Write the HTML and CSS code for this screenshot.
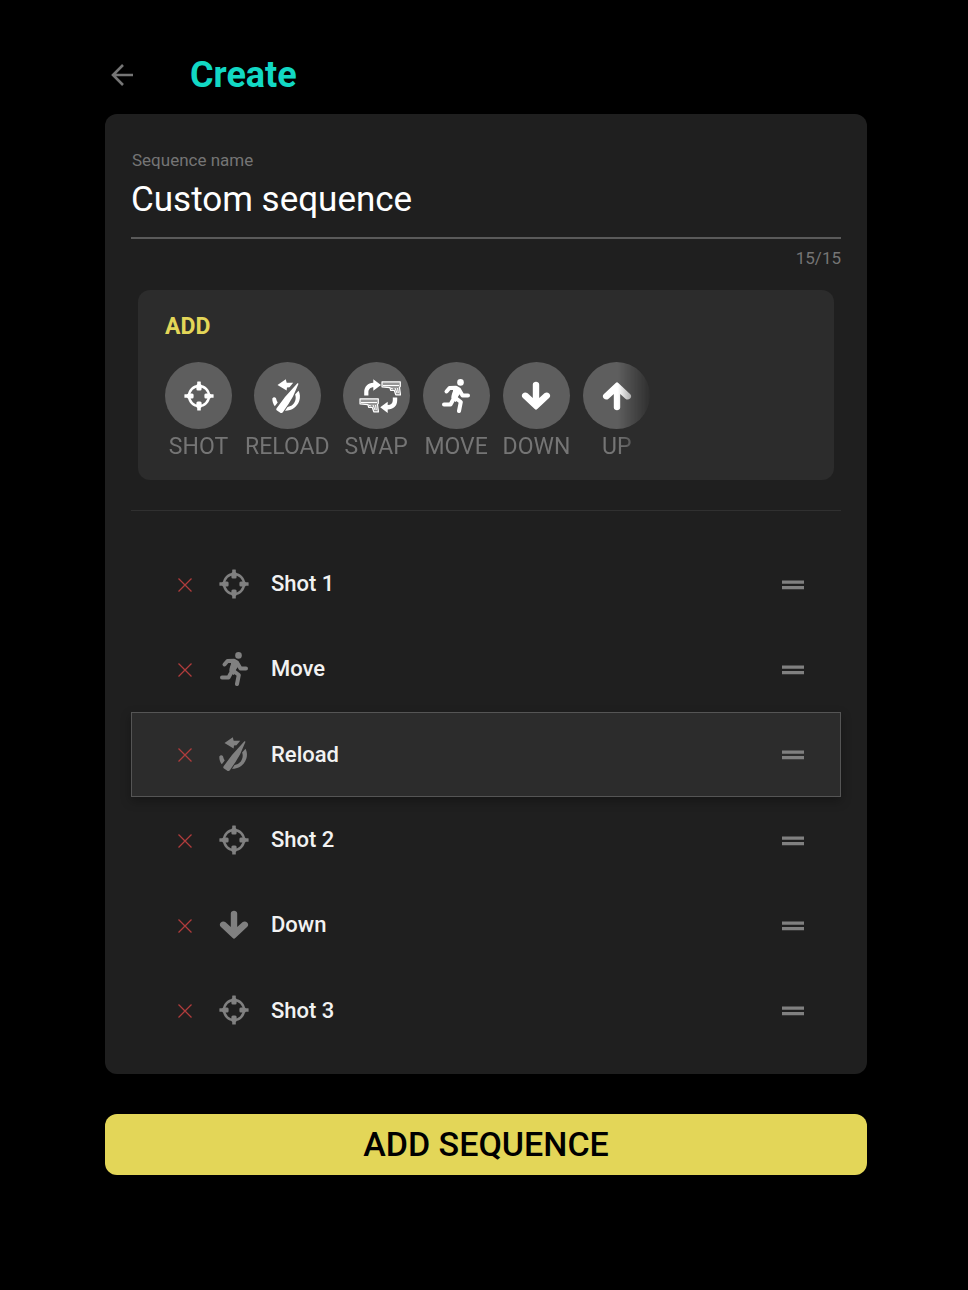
FILE: index.html
```html
<!DOCTYPE html>
<html lang="en">
<head>
  <meta charset="UTF-8" />
  <meta name="viewport" content="width=device-width, initial-scale=1.0"/>
  <title>Create sequence</title>
  <link rel="stylesheet" href="styles.css">
</head>
<body>
  <!-- Shared icons -->
  <svg class="sprite" aria-hidden="true">
    <symbol id="icon-shot" viewBox="0 0 30 34">
      <circle cx="15" cy="17" r="10" fill="none" stroke="currentColor" stroke-width="2.5"/>
      <g fill="currentColor">
        <rect x="13.2" y="2.400" width="3.600" height="6" rx=".5"/>
        <rect x="12.4" y="5" width="5.200" height="6.600" rx="1.500"/>
        <rect x="13.200" y="25.600" width="3.600" height="6" rx=".5"/>
        <rect x="12.400" y="22.400" width="5.200" height="6.600" rx="1.500"/>
        <rect x=".4" y="15.200" width="6" height="3.600" rx=".5"/>
        <rect x="3" y="14.400" width="6.600" height="5.200" rx="1.500"/>
        <rect x="23.600" y="15.200" width="6" height="3.600" rx=".5"/>
        <rect x="20.400" y="14.400" width="6.600" height="5.200" rx="1.500"/>
      </g>
    </symbol>
    <symbol id="icon-move" viewBox="0 0 30 34">
      <circle cx="19.5" cy="3.400" r="3.300" fill="currentColor"/>
      <g fill="none" stroke="currentColor" stroke-width="4" stroke-linecap="round" stroke-linejoin="round">
        <path d="M5.500 12.500L8.500 9l6.500-.2 3 1.700 3.500 6H27"/>
        <path d="M3 25.500h6.500l2.200-4"/>
        <path d="M14 18.500l5.800 4.500-1.800 9"/>
      </g>
      <path d="M12 8l6 1.500 1.800 4-3.300 5 1 2-3 2.500-4-3c-.6-2 .3-5 1.500-8z" fill="currentColor"/>
    </symbol>
    <symbol id="icon-reload" viewBox="0 0 30 34">
      <path d="M5.500 6L13.800.3l.9 3.500h6.500l-3.700 4.500-2.500.2-.4 3z" fill="currentColor"/>
      <path d="M25.400 4.300c.8-.4 1.200.2.900 1L21 17.500l-4.500 7.500-5.500 8c-.8 1.100-1.700 1.300-2.700.7l-3.300-2.200c-1-.7-1-1.500-.2-2.500L13 18z" fill="currentColor"/>
      <path d="M26.500 11.800c1.600 3 1.900 6.600.8 10C25.300 28 19.600 32 13 31.800l2.600-3.900c4.200-.5 7.100-3.400 7.900-7.400.4-1.800.2-3.500-.4-5.100zM.3 19.500c1-1.500 2.700-1.600 3.700-.3.300 1.700.9 3.100 1.700 4.300l-2.900 3.800C1.100 25 .2 22.300.3 19.500z" fill="currentColor"/>
    </symbol>
    <symbol id="icon-down" viewBox="0 0 30 34">
      <path d="M11.800 5.500c0-3.700 6.400-3.700 6.400 0V19l5.200-4.700c3.200-2.700 7.700 1.500 4.900 4.400L16.300 30.100a1.800 1.800 0 0 1-2.600 0L1.700 18.700c-2.800-2.900 1.700-7.100 4.900-4.400l5.200 4.700z" fill="currentColor"/>
    </symbol>
    <symbol id="icon-up" viewBox="0 0 30 34">
      <path d="M11.800 28.500c0 3.700 6.400 3.700 6.400 0V15l5.200 4.700c3.200 2.700 7.700-1.500 4.900-4.400L16.300 3.900a1.800 1.800 0 0 0-2.600 0L1.700 15.300c-2.800 2.900 1.700 7.100 4.900 4.400l5.200-4.700z" fill="currentColor"/>
    </symbol>
    <symbol id="icon-swap" viewBox="0 0 42 34">
      <path d="M5.200 16.500v-3.200C5.200 7.500 9 3.700 14.300 3.700V.3L22 6l-7.700 5.800V8.200c-3 0-4.900 2.100-4.900 5.200v3.100zM38.200 18.500v2.800c0 5.800-4 9.200-9.500 9.200V34l-7.500-5.700 7.500-5.600v3.400c3.300 0 5.100-1.900 5.100-4.800v-2.800z" fill="currentColor"/>
      <g id="gun">
        <path d="M23 2.800h18.300v4.500l-.8 1.200 1 7.300h-4.700l-1.500-4.300h-3.500l-1-2.900L23 7.800z" fill="currentColor" fill-opacity=".35" stroke="currentColor" stroke-width="1.200" stroke-linejoin="round"/>
        <path d="M24 6.500h16M31.500 9l2.500 1M36 9l2 5M38.500 9l.8 5" fill="none" stroke="currentColor"/>
      </g>
      <use href="#gun" x="-22" y="17"/>
    </symbol>
    <symbol id="icon-close" viewBox="0 0 14 14">
      <path d="M.5.5l13 13M13.500.5l-13 13" stroke="currentColor" stroke-width="1.300"/>
    </symbol>
    <symbol id="icon-drag" viewBox="0 0 22 10">
      <path d="M0 .5h22v3.300H0zM0 6h22v3.300H0z" fill="currentColor"/>
    </symbol>
  </svg>

  <div class="container">
    <header>
      <a href="#" class="back-link" aria-label="Back">
        <svg viewBox="0 0 22 22"><path d="M22 11H2M12 1L2 11l10 10" fill="none" stroke="currentColor" stroke-width="2.600"/></svg>
      </a>
      <h1>Create</h1>
    </header>

    <main class="card">
      <div class="field">
        <label for="sequence-name">Sequence name</label>
        <input type="text" id="sequence-name" value="Custom sequence" maxlength="15">
        <div class="counter">15/15</div>
      </div>

      <section class="add-panel">
        <h2>ADD</h2>
        <div class="actions">
          <button class="action"><span class="circle"><svg><use href="#icon-shot"/></svg></span>SHOT</button>
          <button class="action"><span class="circle"><svg><use href="#icon-reload"/></svg></span>RELOAD</button>
          <button class="action"><span class="circle"><svg class="wide"><use href="#icon-swap"/></svg></span>SWAP</button>
          <button class="action"><span class="circle"><svg><use href="#icon-move"/></svg></span>MOVE</button>
          <button class="action"><span class="circle"><svg><use href="#icon-down"/></svg></span>DOWN</button>
          <button class="action"><span class="circle"><svg><use href="#icon-up"/></svg></span>UP</button>
        </div>
      </section>

      <hr>

      <ul class="steps">
        <li class="step">
          <button class="remove" aria-label="Remove"><svg><use href="#icon-close"/></svg></button>
          <svg class="step-icon"><use href="#icon-shot"/></svg>
          <span class="step-name">Shot 1</span>
          <button class="drag" aria-label="Reorder"><svg><use href="#icon-drag"/></svg></button>
        </li>
        <li class="step">
          <button class="remove" aria-label="Remove"><svg><use href="#icon-close"/></svg></button>
          <svg class="step-icon"><use href="#icon-move"/></svg>
          <span class="step-name">Move</span>
          <button class="drag" aria-label="Reorder"><svg><use href="#icon-drag"/></svg></button>
        </li>
        <li class="step dragging">
          <button class="remove" aria-label="Remove"><svg><use href="#icon-close"/></svg></button>
          <svg class="step-icon"><use href="#icon-reload"/></svg>
          <span class="step-name">Reload</span>
          <button class="drag" aria-label="Reorder"><svg><use href="#icon-drag"/></svg></button>
        </li>
        <li class="step">
          <button class="remove" aria-label="Remove"><svg><use href="#icon-close"/></svg></button>
          <svg class="step-icon"><use href="#icon-shot"/></svg>
          <span class="step-name">Shot 2</span>
          <button class="drag" aria-label="Reorder"><svg><use href="#icon-drag"/></svg></button>
        </li>
        <li class="step">
          <button class="remove" aria-label="Remove"><svg><use href="#icon-close"/></svg></button>
          <svg class="step-icon"><use href="#icon-down"/></svg>
          <span class="step-name">Down</span>
          <button class="drag" aria-label="Reorder"><svg><use href="#icon-drag"/></svg></button>
        </li>
        <li class="step">
          <button class="remove" aria-label="Remove"><svg><use href="#icon-close"/></svg></button>
          <svg class="step-icon"><use href="#icon-shot"/></svg>
          <span class="step-name">Shot 3</span>
          <button class="drag" aria-label="Reorder"><svg><use href="#icon-drag"/></svg></button>
        </li>
      </ul>
    </main>

    <button class="submit">ADD SEQUENCE</button>
  </div>
</body>
</html>
```
FILE: styles.css
```css
:root {
  --bg: #000;
  --card: #1f1f1f;
  --panel: #2c2c2c;
  --circle: #5e5e5e;
  --muted: #757575;
  --teal: #12d8c4;
  --yellow: #e3d658;
  --red: #b03c3c;
}

* {
  box-sizing: border-box;
}

body {
  margin: 0;
  background-color: var(--bg);
  color: #fff;
  font-family: Roboto, sans-serif;
}

button {
  padding: 0;
  border: none;
  background: none;
  color: inherit;
  font-family: inherit;
  cursor: pointer;
}

svg {
  display: block;
}

.sprite {
  position: absolute;
  width: 0;
  height: 0;
}

.container {
  padding: 50px 101px 50px 105px;
}

header {
  display: flex;
  align-items: center;
  gap: 57px;
  height: 50px;
  padding-left: 6px;
  margin-bottom: 14px;
}

h1 {
  margin: 0;
  font-size: 36px;
  font-weight: 700;
  color: var(--teal);
}

.back-link {
  color: var(--muted);
}

.back-link svg {
  width: 22px;
  height: 22px;
}

.card {
  padding: 36px 26px 21px;
  border-radius: 12px;
  background-color: var(--card);
}

.field {
  display: flex;
  flex-direction: column;
}

.field label {
  padding-left: 1px;
  font-size: 17px;
  line-height: 20px;
  color: var(--muted);
}

.field input {
  height: 69px;
  padding: 0 0 8px;
  border: none;
  border-bottom: 2px solid #5a5a5a;
  outline: none;
  background: none;
  color: #fff;
  font-family: inherit;
  font-size: 35px;
}

.counter {
  margin-top: 9px;
  text-align: right;
  font-size: 17px;
  line-height: 20px;
  color: var(--muted);
}

.add-panel {
  margin: 22px 7px 30px;
  padding: 23px 27px 19px;
  border-radius: 12px;
  background-color: var(--panel);
}

.add-panel h2 {
  margin: 0 0 21px;
  font-size: 23px;
  line-height: 28px;
  font-weight: 700;
  color: var(--yellow);
}

/* the row fades out where it can be scrolled */
.actions {
  display: flex;
  gap: 13px;
  max-width: 487px;
  overflow: hidden;
  -webkit-mask-image: linear-gradient(to right, #000 93%, transparent);
  mask-image: linear-gradient(to right, #000 93%, transparent);
}

.action {
  display: flex;
  flex-direction: column;
  flex-shrink: 0;
  align-items: center;
  gap: 4px;
  font-size: 23px;
  line-height: 28px;
  color: var(--muted);
}

.circle {
  display: flex;
  align-items: center;
  justify-content: center;
  width: 67px;
  height: 67px;
  border-radius: 50%;
  background-color: var(--circle);
  color: #fff;
}

.circle svg,
.step-icon {
  width: 30px;
  height: 34px;
}

.circle .wide {
  width: 42px;
  margin-left: 8px;
}

hr {
  height: 1px;
  margin: 0 0 30px;
  border: none;
  background-color: #303030;
}

.steps {
  display: grid;
  grid-auto-rows: 1fr;
  min-height: 512px;
  margin: 0;
  padding: 0;
  list-style: none;
}

.step {
  display: flex;
  align-items: center;
  padding: 0 36px 0 46px;
  border: 1px solid transparent;
}

.dragging {
  border-color: #555;
  background-color: var(--panel);
  box-shadow: 0 4px 10px rgba(0, 0, 0, 0.3);
}

.remove {
  margin-right: 27px;
  padding-top: 2px;
  color: var(--red);
}

.remove svg {
  width: 14px;
  height: 14px;
}

.step-icon {
  margin-right: 22px;
  color: #808080;
}

.step-name {
  flex: 1;
  font-size: 22px;
  font-weight: 500;
  color: #f2f2f2;
}

.drag {
  padding-top: 2px;
  color: #808080;
}

.drag svg {
  width: 22px;
  height: 10px;
}

.submit {
  width: 100%;
  height: 61px;
  margin-top: 40px;
  padding-bottom: 2px;
  border-radius: 12px;
  background-color: var(--yellow);
  color: #000;
  font-size: 34px;
  font-weight: 500;
}
```
